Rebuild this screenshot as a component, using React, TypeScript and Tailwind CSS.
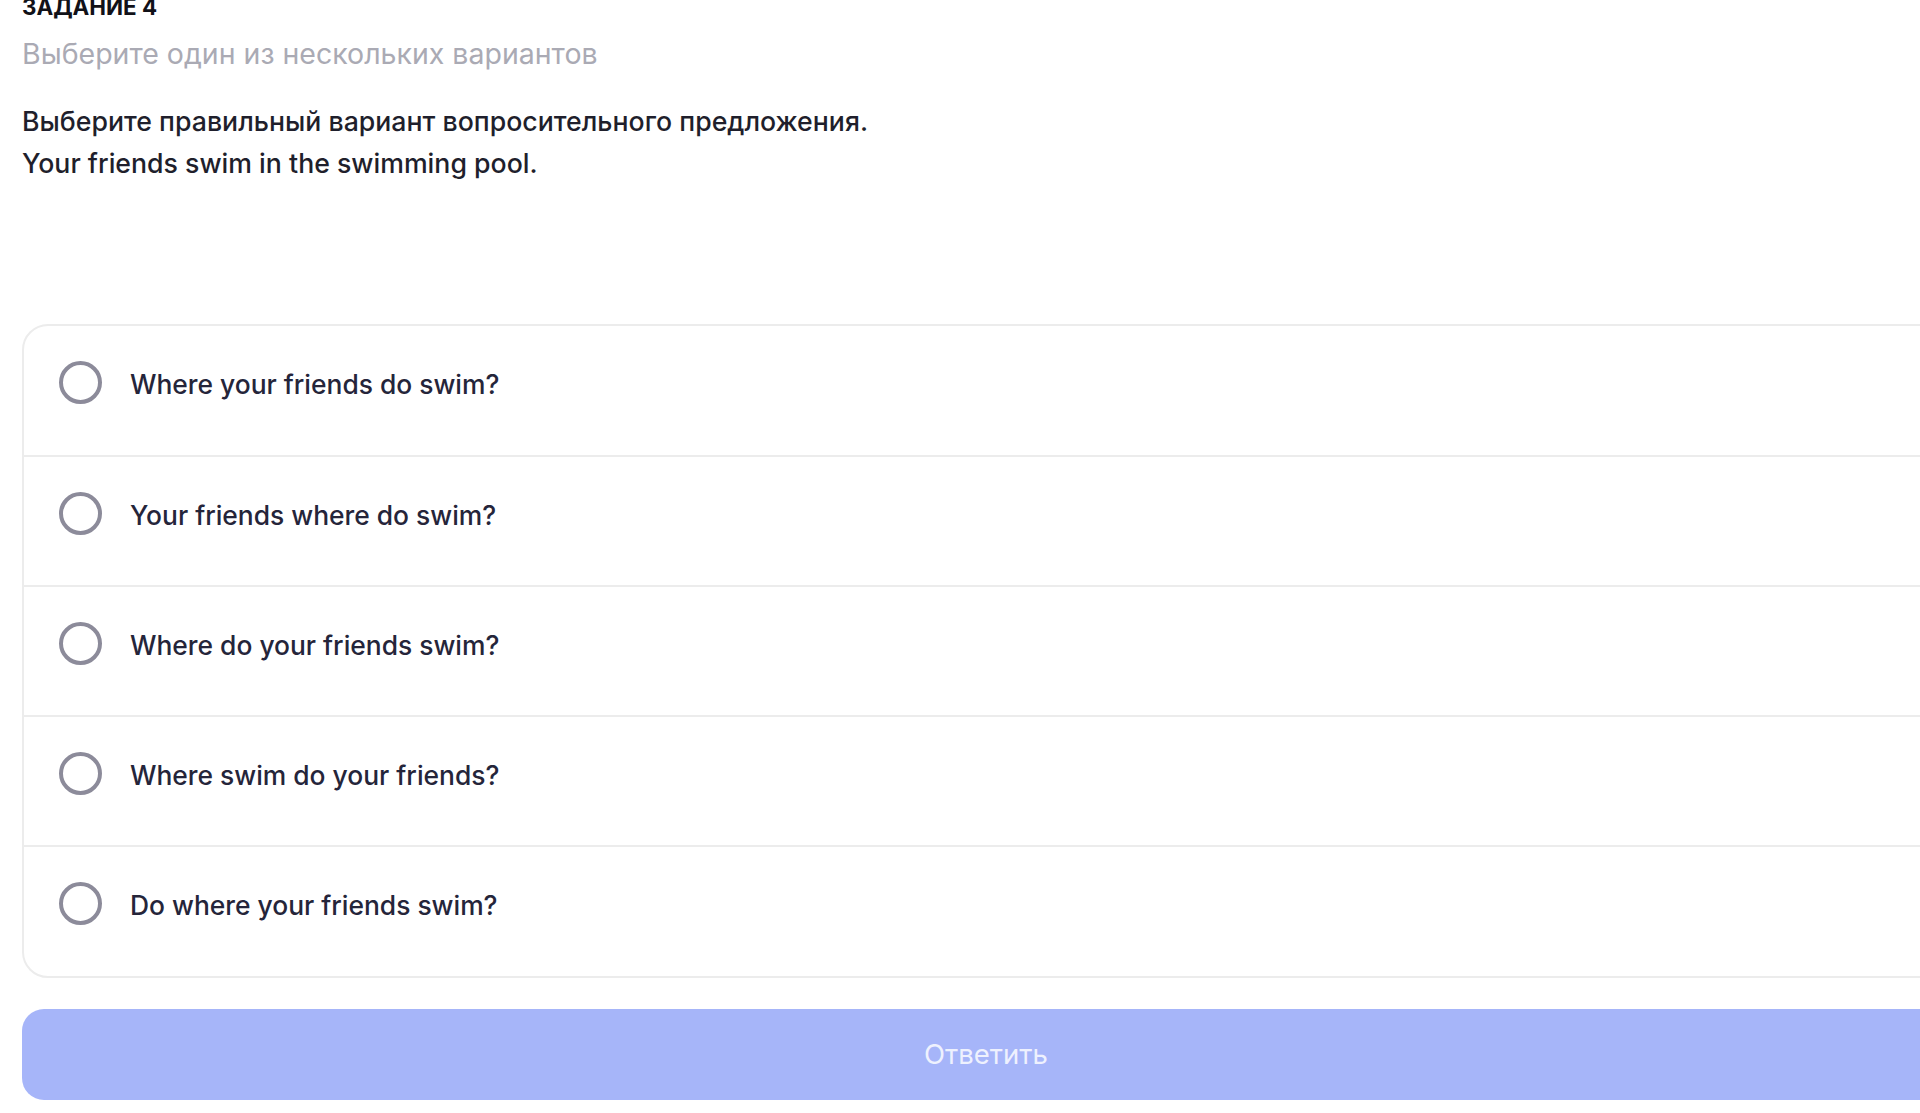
const options = [
  'Where your friends do swim?',
  'Your friends where do swim?',
  'Where do your friends swim?',
  'Where swim do your friends?',
  'Do where your friends swim?',
];

function Radio() {
  return <span className="block w-[43px] h-[43px] shrink-0 rounded-full border-[4px] border-[#8c8b9a]" />;
}

export default function App() {
  return (
    <div className="w-screen h-screen overflow-hidden bg-white font-['Inter','Noto_Sans',sans-serif]">
      <div className="w-[1950px] pl-[22px] pb-[13px]">
        {/* Task header */}
        <div className="-mt-[6px] text-[22.4px] leading-[26px] font-bold text-[#111118]">ЗАДАНИЕ 4</div>
        <div className="mt-[16px] text-[28.5px] leading-[36px] text-[#aaaab4]">
          Выберите один из нескольких вариантов
        </div>

        {/* Question */}
        <div className="mt-[28px] text-[26.7px] leading-[42px] font-medium text-[#1f1f2c]">
          <p>Выберите правильный вариант вопросительного предложения.</p>
          <p>Your friends swim in the swimming pool.</p>
        </div>

        {/* Answer options */}
        <div className="mt-[140px] rounded-[26px] border-2 border-[#ececec] overflow-hidden">
          {options.map((text, i) => (
            <label
              key={i}
              className={`flex items-start gap-[28px] pt-[35px] pl-[35px] cursor-pointer ${
                i > 0 ? 'border-t-2 border-[#ececec] h-[130px]' : 'h-[129px]'
              } ${i === options.length - 1 ? 'h-[131px]' : ''}`}
            >
              <Radio />
              <span className="pt-[2px] text-[26.4px] leading-[43px] font-medium text-[#25253a]">{text}</span>
            </label>
          ))}
        </div>

        {/* Submit */}
        <button
          type="button"
          className="mt-[31px] w-full h-[91px] rounded-[22px] bg-[#a6b5f9] text-[27.5px] text-[#eef1fe] leading-none"
        >
          Ответить
        </button>
      </div>
    </div>
  );
}
